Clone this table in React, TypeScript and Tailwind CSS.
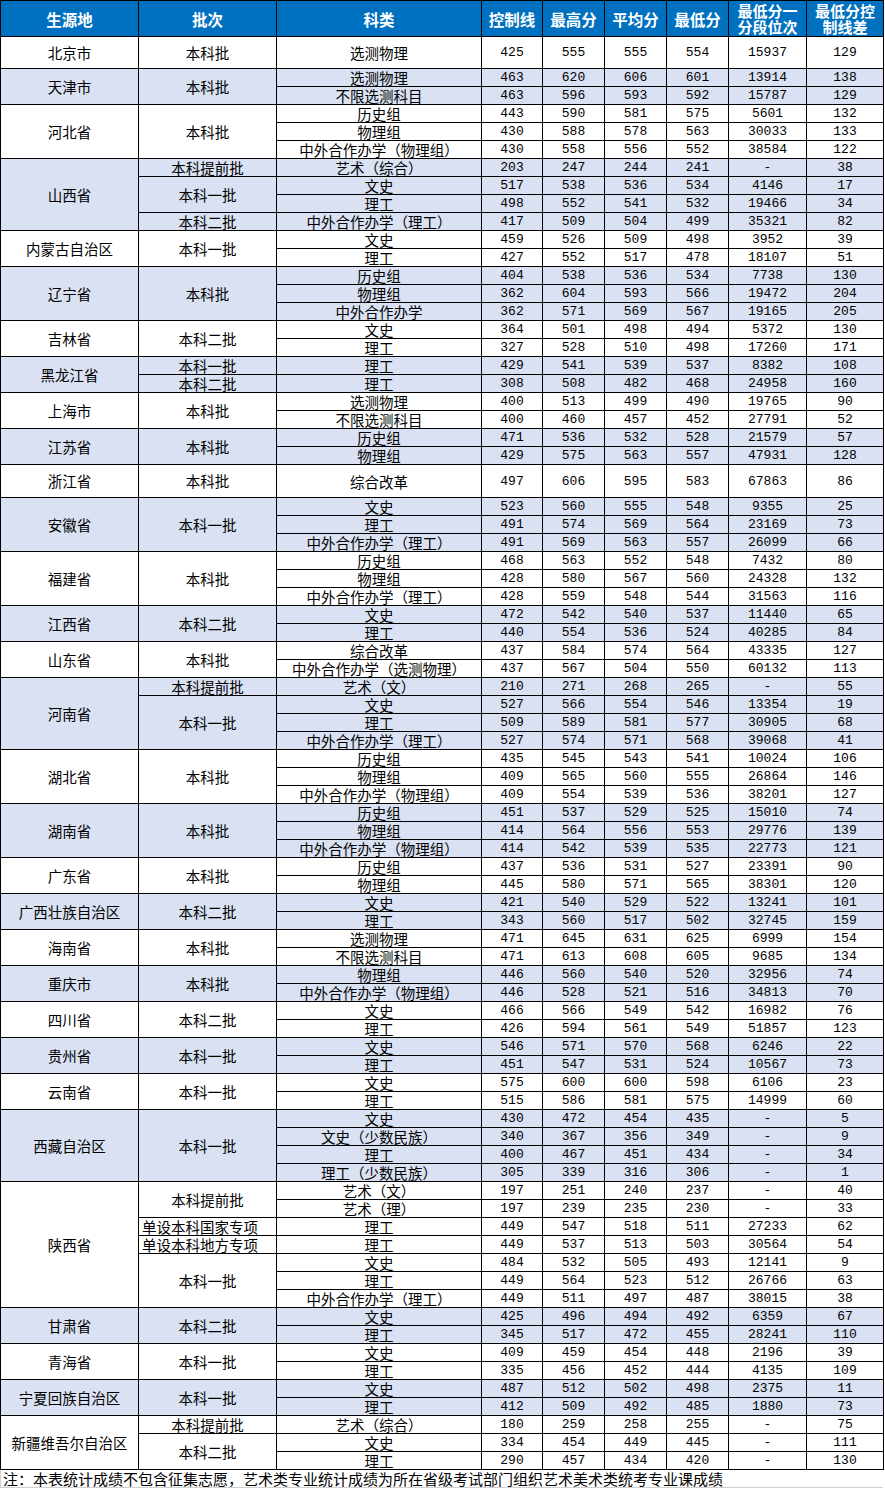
import React from 'react'

type Row = [string, string, string, string, string, string, string]
type Batch = { name: string; rows: Row[]; left?: boolean }
type Province = { name: string; batches: Batch[]; h?: string }

const r = (s: string): Row => s.split(' ') as Row

const data: Province[] = [
  { name: '北京市', h: 'h-[32px]', batches: [{ name: '本科批', rows: [r('选测物理 425 555 555 554 15937 129')] }] },
  { name: '天津市', batches: [{ name: '本科批', rows: [r('选测物理 463 620 606 601 13914 138'), r('不限选测科目 463 596 593 592 15787 129')] }] },
  {
    name: '河北省',
    batches: [
      {
        name: '本科批',
        rows: [r('历史组 443 590 581 575 5601 132'), r('物理组 430 588 578 563 30033 133'), r('中外合作办学（物理组） 430 558 556 552 38584 122')],
      },
    ],
  },
  {
    name: '山西省',
    batches: [
      { name: '本科提前批', rows: [r('艺术（综合） 203 247 244 241 - 38')] },
      { name: '本科一批', rows: [r('文史 517 538 536 534 4146 17'), r('理工 498 552 541 532 19466 34')] },
      { name: '本科二批', rows: [r('中外合作办学（理工） 417 509 504 499 35321 82')] },
    ],
  },
  { name: '内蒙古自治区', batches: [{ name: '本科一批', rows: [r('文史 459 526 509 498 3952 39'), r('理工 427 552 517 478 18107 51')] }] },
  {
    name: '辽宁省',
    batches: [
      {
        name: '本科批',
        rows: [r('历史组 404 538 536 534 7738 130'), r('物理组 362 604 593 566 19472 204'), r('中外合作办学 362 571 569 567 19165 205')],
      },
    ],
  },
  { name: '吉林省', batches: [{ name: '本科二批', rows: [r('文史 364 501 498 494 5372 130'), r('理工 327 528 510 498 17260 171')] }] },
  {
    name: '黑龙江省',
    batches: [
      { name: '本科一批', rows: [r('理工 429 541 539 537 8382 108')] },
      { name: '本科二批', rows: [r('理工 308 508 482 468 24958 160')] },
    ],
  },
  { name: '上海市', batches: [{ name: '本科批', rows: [r('选测物理 400 513 499 490 19765 90'), r('不限选测科目 400 460 457 452 27791 52')] }] },
  { name: '江苏省', batches: [{ name: '本科批', rows: [r('历史组 471 536 532 528 21579 57'), r('物理组 429 575 563 557 47931 128')] }] },
  { name: '浙江省', h: 'h-[33px]', batches: [{ name: '本科批', rows: [r('综合改革 497 606 595 583 67863 86')] }] },
  {
    name: '安徽省',
    batches: [
      {
        name: '本科一批',
        rows: [r('文史 523 560 555 548 9355 25'), r('理工 491 574 569 564 23169 73'), r('中外合作办学（理工） 491 569 563 557 26099 66')],
      },
    ],
  },
  {
    name: '福建省',
    batches: [
      {
        name: '本科批',
        rows: [r('历史组 468 563 552 548 7432 80'), r('物理组 428 580 567 560 24328 132'), r('中外合作办学（理工） 428 559 548 544 31563 116')],
      },
    ],
  },
  { name: '江西省', batches: [{ name: '本科二批', rows: [r('文史 472 542 540 537 11440 65'), r('理工 440 554 536 524 40285 84')] }] },
  {
    name: '山东省',
    batches: [{ name: '本科批', rows: [r('综合改革 437 584 574 564 43335 127'), r('中外合作办学（选测物理） 437 567 504 550 60132 113')] }],
  },
  {
    name: '河南省',
    batches: [
      { name: '本科提前批', rows: [r('艺术（文） 210 271 268 265 - 55')] },
      {
        name: '本科一批',
        rows: [r('文史 527 566 554 546 13354 19'), r('理工 509 589 581 577 30905 68'), r('中外合作办学（理工） 527 574 571 568 39068 41')],
      },
    ],
  },
  {
    name: '湖北省',
    batches: [
      {
        name: '本科批',
        rows: [r('历史组 435 545 543 541 10024 106'), r('物理组 409 565 560 555 26864 146'), r('中外合作办学（物理组） 409 554 539 536 38201 127')],
      },
    ],
  },
  {
    name: '湖南省',
    batches: [
      {
        name: '本科批',
        rows: [r('历史组 451 537 529 525 15010 74'), r('物理组 414 564 556 553 29776 139'), r('中外合作办学（物理组） 414 542 539 535 22773 121')],
      },
    ],
  },
  { name: '广东省', batches: [{ name: '本科批', rows: [r('历史组 437 536 531 527 23391 90'), r('物理组 445 580 571 565 38301 120')] }] },
  { name: '广西壮族自治区', batches: [{ name: '本科二批', rows: [r('文史 421 540 529 522 13241 101'), r('理工 343 560 517 502 32745 159')] }] },
  { name: '海南省', batches: [{ name: '本科批', rows: [r('选测物理 471 645 631 625 6999 154'), r('不限选测科目 471 613 608 605 9685 134')] }] },
  { name: '重庆市', batches: [{ name: '本科批', rows: [r('物理组 446 560 540 520 32956 74'), r('中外合作办学（物理组） 446 528 521 516 34813 70')] }] },
  { name: '四川省', batches: [{ name: '本科二批', rows: [r('文史 466 566 549 542 16982 76'), r('理工 426 594 561 549 51857 123')] }] },
  { name: '贵州省', batches: [{ name: '本科一批', rows: [r('文史 546 571 570 568 6246 22'), r('理工 451 547 531 524 10567 73')] }] },
  { name: '云南省', batches: [{ name: '本科一批', rows: [r('文史 575 600 600 598 6106 23'), r('理工 515 586 581 575 14999 60')] }] },
  {
    name: '西藏自治区',
    batches: [
      {
        name: '本科一批',
        rows: [
          r('文史 430 472 454 435 - 5'),
          r('文史（少数民族） 340 367 356 349 - 9'),
          r('理工 400 467 451 434 - 34'),
          r('理工（少数民族） 305 339 316 306 - 1'),
        ],
      },
    ],
  },
  {
    name: '陕西省',
    batches: [
      { name: '本科提前批', rows: [r('艺术（文） 197 251 240 237 - 40'), r('艺术（理） 197 239 235 230 - 33')] },
      { name: '单设本科国家专项', left: true, rows: [r('理工 449 547 518 511 27233 62')] },
      { name: '单设本科地方专项', left: true, rows: [r('理工 449 537 513 503 30564 54')] },
      {
        name: '本科一批',
        rows: [r('文史 484 532 505 493 12141 9'), r('理工 449 564 523 512 26766 63'), r('中外合作办学（理工） 449 511 497 487 38015 38')],
      },
    ],
  },
  { name: '甘肃省', batches: [{ name: '本科二批', rows: [r('文史 425 496 494 492 6359 67'), r('理工 345 517 472 455 28241 110')] }] },
  { name: '青海省', batches: [{ name: '本科一批', rows: [r('文史 409 459 454 448 2196 39'), r('理工 335 456 452 444 4135 109')] }] },
  { name: '宁夏回族自治区', batches: [{ name: '本科一批', rows: [r('文史 487 512 502 498 2375 11'), r('理工 412 509 492 485 1880 73')] }] },
  {
    name: '新疆维吾尔自治区',
    batches: [
      { name: '本科提前批', rows: [r('艺术（综合） 180 259 258 255 - 75')] },
      { name: '本科二批', rows: [r('文史 334 454 449 445 - 111'), r('理工 290 457 434 420 - 130')] },
    ],
  },
]

const cjk = "font-['Noto_Sans_CJK_SC','Noto_Sans',sans-serif]"
const mono = "font-['Liberation_Mono','DejaVu_Sans_Mono',monospace]"
const td = 'border border-black p-0 text-center align-middle'

function Header() {
  const heads = ['生源地', '批次', '科类', '控制线', '最高分', '平均分', '最低分']
  return (
    <tr className="h-[36px] bg-[#0070c0] text-white text-[15.5px] leading-[16px]">
      {heads.map((h) => (
        <th key={h} className={`${td} font-bold`}>
          {h}
        </th>
      ))}
      <th className={`${td} font-bold text-[15px] leading-[16px]`}>
        最低分一
        <br />
        分段位次
      </th>
      <th className={`${td} font-bold text-[15px] leading-[16px]`}>
        最低分控
        <br />
        制线差
      </th>
    </tr>
  )
}

function ProvinceRows({ p, shade }: { p: Province; shade: boolean }) {
  const total = p.batches.reduce((n, b) => n + b.rows.length, 0)
  const bg = shade ? 'bg-[#d9e1f2]' : 'bg-white'
  const out: React.ReactNode[] = []
  p.batches.forEach((b, bi) => {
    b.rows.forEach((row, ri) => {
      const [subject, ...nums] = row
      out.push(
        <tr key={`${p.name}-${bi}-${ri}`} className={`${bg} ${p.h ?? 'h-[18px]'}`}>
          {bi === 0 && ri === 0 && (
            <td rowSpan={total} className={`${td} text-[14.5px] leading-[16px]`}>
              {p.name}
            </td>
          )}
          {ri === 0 && (
            <td rowSpan={b.rows.length} className={`${td} text-[14.5px] leading-[16px] ${b.left ? 'text-left pl-[3px]' : ''}`}>
              {b.name}
            </td>
          )}
          <td className={`${td} pt-[1px] text-[14.5px] leading-[16px] whitespace-nowrap`}>{subject}</td>
          {nums.map((n, i) => (
            <td key={i} className={`${td} ${mono} pt-[1px] text-[13px] leading-[16px]`}>
              {n}
            </td>
          ))}
        </tr>,
      )
    })
  })
  return <>{out}</>
}

export default function App() {
  return (
    <div className={`w-[885px] bg-white ${cjk} text-black`}>
      <table className="w-[883px] border-collapse table-fixed">
        <colgroup>
          <col className="w-[138px]" />
          <col className="w-[138px]" />
          <col className="w-[205px]" />
          <col className="w-[61px]" />
          <col className="w-[62px]" />
          <col className="w-[62px]" />
          <col className="w-[62px]" />
          <col className="w-[78px]" />
          <col className="w-[77px]" />
        </colgroup>
        <tbody>
          <Header />
          {data.map((p, i) => (
            <ProvinceRows key={p.name} p={p} shade={i % 2 === 1} />
          ))}
        </tbody>
      </table>
      <div className="w-[883px] h-[18px] pl-[2px] text-[15px] leading-[17px] border-b border-l border-[#d0d0d0] whitespace-nowrap">
        注：本表统计成绩不包含征集志愿，艺术类专业统计成绩为所在省级考试部门组织艺术美术类统考专业课成绩
      </div>
    </div>
  )
}
